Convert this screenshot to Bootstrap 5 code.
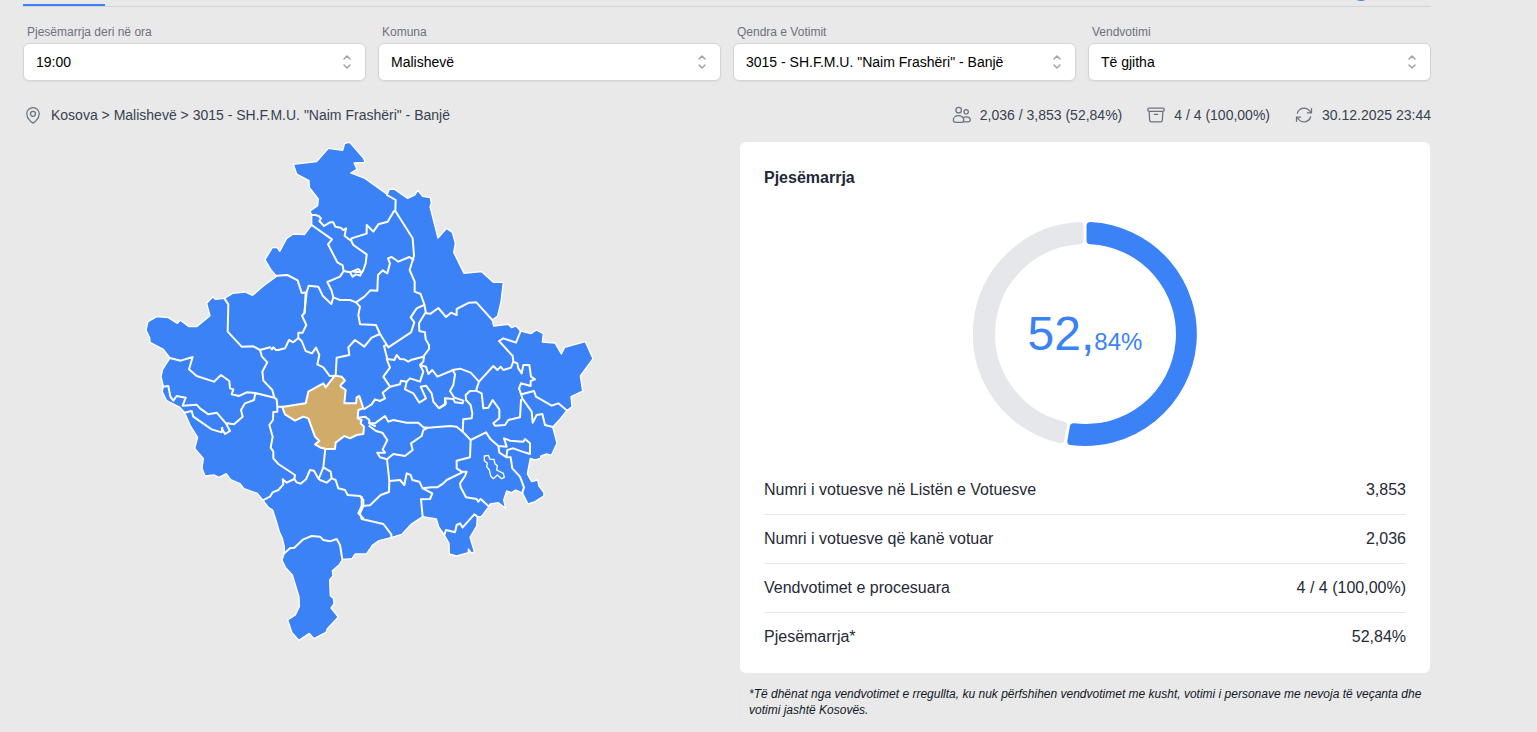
<!DOCTYPE html>
<html lang="sq">
<head>
<meta charset="utf-8">
<meta name="viewport" content="width=device-width, initial-scale=1">
<title>Pjesëmarrja</title>
<link href="https://cdn.jsdelivr.net/npm/bootstrap@5.3.0/dist/css/bootstrap.min.css" rel="stylesheet">
<style>
  body { background: #e9e9e9; color: #1f2937; font-family: "Liberation Sans", Arial, sans-serif; font-size: 16px; line-height: 24px; }
  .page { padding: 0 106px 0 23px; }
  .tab-strip { height: 7px; border-bottom: 1px solid #d1d5db; overflow: hidden; }
  .tab-current { width: 82px; height: 6px; border-bottom: 2px solid #3b82f6; }
  .info-dot { width: 20px; height: 20px; margin: -19px 60px 0 0; border-radius: 50%; background: #3b82f6; }
  .filters { padding-top: 17px; gap: 12px; }
  .filters > div { flex: 1 1 0; min-width: 200px; }
  .filters label { display: block; font-size: 12px; line-height: 16px; color: #6b7280; margin: 0 0 3px 4px; }
  .filters .form-select { height: 38px; padding: 0 36px 0 12px; font-size: 14px; line-height: 20px; color: #000; border: 1px solid #d1d5db; border-radius: 6px; box-shadow: 0 1px 2px rgba(0,0,0,.05);
    background: #fff url("data:image/svg+xml,%3Csvg xmlns='http://www.w3.org/2000/svg' viewBox='0 0 20 20' fill='none' stroke='%239ca3af' stroke-width='1.5' stroke-linecap='round' stroke-linejoin='round'%3E%3Cpath d='M7 7l3-3 3 3m0 6l-3 3-3-3'/%3E%3C/svg%3E") no-repeat right 8px center / 20px 20px; }
  .status { margin-top: 24px; font-size: 14px; line-height: 20px; color: #374151; column-gap: 24px; }
  .status svg { width: 20px; height: 20px; flex: none; fill: none; stroke: #6b7280; stroke-width: 1.5; stroke-linecap: round; stroke-linejoin: round; }
  .panels { margin-top: 16px; display: grid; grid-template-columns: repeat(auto-fit, minmax(min(100%, 480px), 1fr)); gap: 24px; }
  .map { width: 450px; max-width: 100%; height: auto; }
  .map .land { fill: #3b82f6; stroke: #fff; stroke-width: 4; stroke-linejoin: round; }
  .map .borders { fill: none; stroke: #fff; stroke-width: 6; stroke-linejoin: round; stroke-linecap: round; }
  .map .enclave { stroke-width: 4; }
  .map .picked { fill: #d1ab69; stroke: #fff; stroke-width: 6; stroke-linejoin: round; }
  .turnout { border: 1px solid #e9e9e9; border-radius: 7px; background: #fff; padding: 24px 24px 12px; }
  .turnout h2 { font-size: 16px; line-height: 24px; font-weight: 700; margin: 0 0 32px; }
  .ring { width: 224px; height: 224px; margin: 0 auto 20px; }
  .ring-value { color: #3b82f6; font-size: 48px; line-height: 48px; padding-top: 8px; }
  .ring-value span { font-size: 24px; }
  .figures { width: 100%; }
  .figures th, .figures td { padding: 12px 0; font-weight: 400; border-bottom: 1px solid #e5e7eb; }
  .figures tr:last-child > * { border-bottom: 0; }
  .footnote { margin: 12px 1px 0; padding: 0 8px 8px; border-left: 1px solid #e5e7eb; font-size: 12px; line-height: 16px; font-style: italic; color: #111827; }
</style>
</head>
<body>
<main class="page">
  <div class="tab-strip d-flex justify-content-between">
    <div class="tab-current"></div>
    <div class="info-dot"></div>
  </div>

  <form class="filters d-flex flex-wrap">
    <div><label for="ora">Pjesëmarrja deri në ora</label><select class="form-select" id="ora"><option>19:00</option></select></div>
    <div><label for="komuna">Komuna</label><select class="form-select" id="komuna"><option>Malishevë</option></select></div>
    <div><label for="qendra">Qendra e Votimit</label><select class="form-select" id="qendra"><option>3015 - SH.F.M.U. "Naim Frashëri" - Banjë</option></select></div>
    <div><label for="vend">Vendvotimi</label><select class="form-select" id="vend"><option>Të gjitha</option></select></div>
  </form>

  <div class="status d-flex flex-wrap">
    <div class="d-flex gap-2 me-auto">
      <svg viewBox="0 0 24 24" aria-hidden="true"><path d="M15 10.5a3 3 0 11-6 0 3 3 0 016 0z"/><path d="M19.5 10.5c0 7.142-7.5 11.25-7.5 11.25S4.5 17.642 4.5 10.5a7.5 7.5 0 1115 0z"/></svg>
      <span>Kosova &gt; Malishevë &gt; 3015 - SH.F.M.U. "Naim Frashëri" - Banjë</span>
    </div>
    <div class="d-flex gap-2">
      <svg viewBox="0 0 24 24" aria-hidden="true"><circle cx="8" cy="6.2" r="3.3"/><circle cx="17" cy="8.2" r="2.6"/><path d="M7.8 12.8c-3.600 0-6.200 2.400-6.200 5.200 0 2 1.400 2.800 3 2.800h6.600c1.700 0 3-.9 3-2.800 0-2.800-2.700-5.200-6.400-5.200zM13.300 15.200c1-.7 2.200-1 3.500-1 3 0 5.200 1.700 5.200 3.900 0 1.500-1 2-2.300 2h-5.900"/></svg>
      <span>2,036 / 3,853 (52,84%)</span>
    </div>
    <div class="d-flex gap-2">
      <svg viewBox="0 0 24 24" aria-hidden="true"><path d="M20.25 7.5l-.625 10.632a2.25 2.25 0 01-2.247 2.118H6.622a2.25 2.25 0 01-2.247-2.118L3.75 7.5M10 11.25h4M3.375 7.5h17.25c.621 0 1.125-.504 1.125-1.125v-1.5c0-.621-.504-1.125-1.125-1.125H3.375c-.621 0-1.125.504-1.125 1.125v1.5c0 .621.504 1.125 1.125 1.125z"/></svg>
      <span>4 / 4 (100,00%)</span>
    </div>
    <div class="d-flex gap-2">
      <svg viewBox="0 0 24 24" aria-hidden="true"><path d="M16.023 9.348h4.992v-.001M2.985 19.644v-4.992m0 0h4.992m-4.993 0l3.181 3.183a8.25 8.25 0 0013.803-3.7M4.031 9.865a8.25 8.25 0 0113.803-3.7l3.181 3.182m0-4.991v4.99"/></svg>
      <span>30.12.2025 23:44</span>
    </div>
  </div>

  <div class="panels">
    <section class="text-center">
      <svg class="map" viewBox="432 423 1350 1500" role="img" aria-label="Harta e komunave">
        <path class="land" d="M880,493 950,485 985,445 1028,451 1034,430 1049,427 1091,475 1095,487 1062,489 1071,508 1052,519 1095,535 1162,583 1168,568 1182,567 1223,595 1245,585 1253,571 1268,589 1291,593 1294,610 1290,620 1314,714 1340,685 1357,697 1366,730 1361,757 1392,820 1445,815 1480,847 1510,847 1503,905 1493,948 1477,960 1481,978 1525,973 1535,983 1548,978 1562,993 1593,1001 1609,990 1630,1001 1627,1026 1665,1029 1684,1062 1694,1042 1756,1025 1779,1076 1741,1128 1748,1173 1713,1190 1716,1220 1700,1232 1682,1255 1658,1281 1671,1330 1654,1366 1640,1362 1623,1368 1621,1375 1605,1380 1591,1375 1582,1422 1595,1445 1613,1440 1617,1458 1632,1478 1631,1488 1605,1505 1584,1512 1568,1480 1558,1475 1547,1470 1535,1478 1520,1473 1511,1500 1517,1525 1495,1508 1470,1512 1465,1522 1444,1550 1432,1550 1430,1578 1410,1612 1423,1655 1415,1660 1405,1647 1405,1658 1370,1668 1348,1662 1347,1630 1333,1605 1317,1582 1309,1557 1268,1550 1233,1573 1205,1603 1173,1613 1137,1622 1118,1635 1100,1661 1065,1662 1056,1676 1028,1678 1017,1695 997,1712 999,1728 989,1739 991,1787 1000,1795 1002,1812 993,1824 1015,1851 982,1886 978,1897 942,1916 928,1900 897,1921 876,1898 863,1860 886,1845 898,1820 897,1790 877,1725 857,1703 846,1680 852,1662 853,1640 847,1615 838,1595 830,1567 818,1530 805,1522 790,1502 772,1480 732,1466 720,1451 692,1439 679,1421 657,1432 643,1425 615,1428 606,1405 610,1375 584,1345 593,1312 570,1275 554,1238 540,1222 500,1202 487,1175 490,1158 483,1130 488,1108 510,1074 490,1048 450,1027 449,1013 438,990 444,965 470,950 505,953 532,970 541,961 567,980 590,980 630,947 620,910 638,891 646,898 673,895 698,880 735,876 758,886 790,858 830,829 812,808 795,779 817,743 831,742 839,754 860,715 880,702 913,704 935,675 935,645 930,633 953,617 955,597 928,562 927,542 890,522Z"/>
        <g class="borders">
          <path transform="translate(750 405)" d="M185,240 196,240 206,243 213,250 208,258 222,273 240,262 250,262 256,275 272,278 280,285 288,280 284,303 304,318 304,310 350,296 350,270 370,290 385,268 413,260 432,228 436,228M411,180 437,195 436,228 488,310 492,362 479,405 494,440 494,470 512,477 523,508 528,535 542,536 565,519 588,546 603,533 620,540 620,522 657,503 679,502 727,555M185,270 246,313 234,328 262,382 278,391 281,408 300,412 308,425 318,418 330,422 340,405 347,385 350,358 310,330 304,318M300,412 325,402 335,412 312,410M281,408 270,425 232,441 244,465 250,487 270,495 300,495 318,502 343,485 361,466 382,467 384,420 398,406 412,415 420,385 414,370 425,366 445,380 478,366 490,374M80,422 112,420 143,436 155,474 170,472 176,452 205,455 218,482 244,507 250,487M170,472 163,535"/>
          <path transform="translate(420 780)" d="M253,115 265,133 263,215 305,260 340,259 360,270 390,262 396,268 400,262 408,270 415,270 435,265 447,240 460,247 475,234 475,218 488,218 499,195 486,167 494,158 497,98M360,270 366,290 382,307 367,335 370,362 397,390 403,413 410,418 412,440 412,455 400,456 399,480 388,495 398,530 392,563 400,575 400,595 415,612 465,645 463,657M412,440 430,440M475,234 485,243 497,273 516,280 528,263 538,285 532,313 550,322 569,348 587,347M90,294 122,302 158,291 147,328 170,348 222,365 243,345 268,363 270,385 280,388 275,403 297,408 320,397 346,399 403,413M346,399 342,420 315,430 303,450 308,470 282,493 262,490M68,380 85,378 91,410 100,422 110,408 137,413 128,437 170,434 180,445 205,463 230,458 258,490 270,513 255,522 245,505M133,458 155,453 160,470 215,508 245,517 247,503"/>
          <path transform="translate(540 1140)" d="M248,361 270,350 278,337 295,330 310,313 308,298 320,308 343,297 350,307 362,311 378,298 390,270 402,272 416,297 430,262 436,205M430,262 452,275 455,295 440,308 420,300M455,295 467,300 475,325 495,330 503,345 540,348 550,360 550,378 540,400 545,417 610,432 634,463 634,475"/>
          <path transform="translate(720 1440)" d="M133,220 150,205 163,203 190,178 215,168 240,170 250,180 270,184 290,177 300,195 307,238"/>
          <path transform="translate(900 870)" d="M168,37 180,50 175,75 180,103 228,105 240,132 265,172 333,127 343,97 332,82 350,55 372,45M375,70 357,100 358,123 375,127 377,148 387,165 387,177 370,200 335,209 325,215 313,208 300,207 290,195 283,210 262,207 252,168 260,165M240,132 215,143 193,170 165,150 145,172 148,195 110,203 107,255M260,207 270,233 250,260 270,290 248,308 255,325 240,333 225,328 215,343 193,357M270,290 300,283 303,272 320,275 330,265 360,275 370,245 360,225 370,215 372,200M360,225 378,230 385,252 397,240 412,260 460,240M320,275 315,298 340,310 358,338 378,325 362,290 378,287 395,310 400,335 417,355 435,345 435,325M175,383 195,380 208,390 208,400 225,408"/>
          <path transform="translate(1080 1200)" d="M5,290 5,318 30,316 62,285 87,276 88,243 81,178 60,172 52,158 75,158 68,148 82,120 67,98 48,93 28,78M10,355 -5,340 5,318M28,70 45,70 75,48 85,65 100,60 140,68 175,68 190,82 205,83 270,78 290,80 308,95 332,120 330,172 290,182 290,205 305,215 320,215 315,228 300,250 302,262 318,292 350,297 355,305 362,297 385,318M205,83 190,90 185,108 153,130 158,150 135,168 100,162 81,178M88,243 120,240 133,255 140,220 152,225 157,240 178,245 188,265 215,262 232,262 250,250 260,240 305,218M188,265 217,280 210,297 183,298 188,350M253,405 258,390 285,397 290,375 300,370 308,382 343,343 352,350M332,120 378,97 392,118 415,138 440,140 432,115 450,122 490,125 495,117 510,130 510,162 487,155 460,145 442,150 440,165M415,138 418,158 440,172 452,172 457,205 480,230 492,262 487,278"/>
          <path class="enclave" transform="translate(1080 1200)" d="M373,168 385,166 390,178 402,178 405,192 412,197 410,210 430,220 433,232 425,236 412,225 400,236 392,228 388,210 380,200 382,190 373,182Z"/>
          <path transform="translate(1320 840)" d="M38,270 60,266 92,278 117,305 108,332 125,340 130,385 145,383 158,360 178,388 178,415 160,430 165,437 195,435 205,420 240,412 243,360 248,357M38,270 45,283 40,315 30,333 42,352 70,362 68,370 45,367 40,357 15,355 18,370 0,382M68,455 70,418 95,415 97,400 92,375 78,360 77,345 90,333 108,332M117,305 160,258 172,270 182,260 190,270 213,263 220,245 218,228 177,183 190,175 228,188 242,153M220,245 232,250 235,265 245,280 250,255 268,255 273,290 285,298 272,303 272,318 243,310 237,325 248,357M245,343 282,333 288,350 335,377 355,370 382,392M248,357 275,395 278,428 290,405 307,402 315,435 338,441"/>
        </g>
        <path class="picked" transform="translate(900 870)" d="M102,260 107,257 125,260 135,272 122,285 122,290 137,300 133,340 168,340 170,322 178,318 190,355 175,360 173,385 185,390 182,400 192,410 190,432 170,435 150,445 133,438 107,458 105,477 80,477 62,473 45,463 58,453 45,440 25,385 10,380 -15,392 -45,373 -53,352 -50,350 17,340 25,305 70,280 77,292Z"/>
      </svg>
    </section>

    <section>
      <div class="turnout">
        <h2>Pjesëmarrja</h2>
        <div class="ring position-relative">
          <svg class="d-block w-100 h-100" viewBox="-112 -112 224 224" stroke-width="8" stroke-linejoin="round" aria-hidden="true">
            <path fill="#e5e7eb" stroke="#e5e7eb" d="M-5.500,-107.9A108,108 0 0 0 -24.5,105.2L-22,91.4A94,94 0 0 1 -5.5,-93.8Z"/>
            <path fill="#3b82f6" stroke="#3b82f6" d="M5.5,-107.9A108,108 0 1 1 -13.7,107.1L-11.2,93.3A94,94 0 1 0 5.5,-93.8Z"/>
          </svg>
          <div class="ring-value position-absolute top-50 start-50 translate-middle text-nowrap">52,<span>84%</span></div>
        </div>
        <table class="figures">
          <tbody>
            <tr><th scope="row">Numri i votuesve në Listën e Votuesve</th><td class="text-end">3,853</td></tr>
            <tr><th scope="row">Numri i votuesve që kanë votuar</th><td class="text-end">2,036</td></tr>
            <tr><th scope="row">Vendvotimet e procesuara</th><td class="text-end">4 / 4 (100,00%)</td></tr>
            <tr><th scope="row">Pjesëmarrja*</th><td class="text-end">52,84%</td></tr>
          </tbody>
        </table>
      </div>
      <p class="footnote">*Të dhënat nga vendvotimet e rregullta, ku nuk përfshihen vendvotimet me kusht, votimi i personave me nevoja të veçanta dhe votimi jashtë Kosovës.</p>
    </section>
  </div>
</main>
<script src="https://cdn.jsdelivr.net/npm/bootstrap@5.3.0/dist/js/bootstrap.bundle.min.js"></script>
</body>
</html>
